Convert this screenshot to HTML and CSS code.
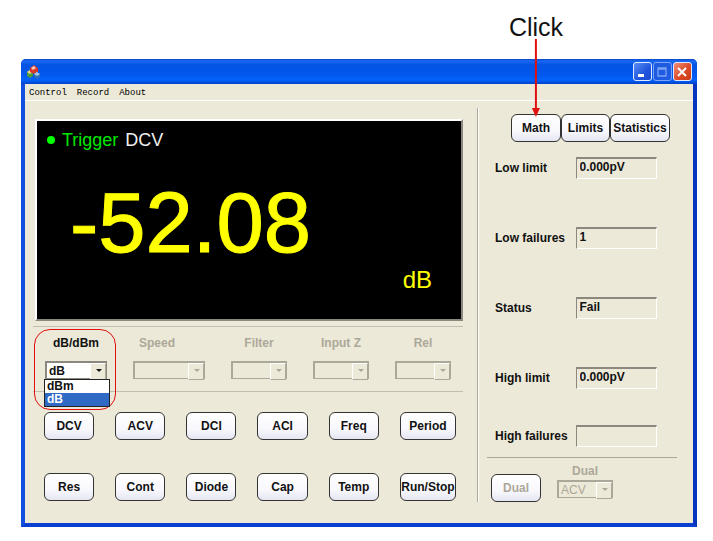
FILE: index.html
```html
<!DOCTYPE html>
<html lang="en">
<head>
  <meta charset="UTF-8">
  <meta name="viewport" content="width=device-width, initial-scale=1.0">
  <title>Multimeter</title>
  <link rel="stylesheet" href="styles.css">
</head>
<body>
  <div class="window">
    <header class="title-bar">
      <svg class="app-icon" width="14" height="14" viewBox="0 0 14 14">
        <path d="M0 7l3-2 3 2v4l-3 2-3-2z" fill="#4d9a3c"/>
        <path d="M0 7l3-2 3 2-3 2z" fill="#e8d890"/>
        <path d="M3 3l4-3 4 3v4L7 9 3 7z" fill="#d8392b"/>
        <path d="M4 3l3-2 2 2-3 2z" fill="#f7c9b8"/>
        <path d="M7 9l3-2 3 2v3l-3 2-3-2z" fill="#2f6fb5"/>
        <path d="M7 9l3-2 3 2-3 2z" fill="#a9c9e8"/>
      </svg>
      <div class="window-buttons">
        <button class="win-btn" aria-label="Minimize">
          <svg width="16" height="16" viewBox="0 0 16 16"><path d="M4 10h6v3H4z" fill="#fff"/></svg>
        </button>
        <button class="win-btn dim" aria-label="Maximize" disabled>
          <svg width="16" height="16" viewBox="0 0 16 16"><path d="M4 4h8v8H4zM4 5h8" fill="none" stroke="#7ba4f5" stroke-width="1.3"/></svg>
        </button>
        <button class="win-btn close" aria-label="Close">
          <svg width="16" height="16" viewBox="0 0 16 16"><path d="M4 4l8 8M12 4l-8 8" stroke="#fff" stroke-width="2"/></svg>
        </button>
      </div>
    </header>

    <nav class="menu">
      <a href="#">Control</a>
      <a href="#">Record</a>
      <a href="#">About</a>
    </nav>

    <main class="content">
      <section class="meter">
        <div class="display">
          <div class="mode"><span class="dot"></span><span class="trigger">Trigger</span> <span>DCV</span></div>
          <div class="reading">-52.08</div>
          <div class="unit">dB</div>
        </div>

        <div class="settings">
          <div class="setting active">
            <label for="scale">dB/dBm</label>
            <div class="combo">
              <select id="scale">
                <option>dBm</option>
                <option selected>dB</option>
              </select>
            </div>
            <ul class="drop-list">
              <li>dBm</li>
              <li class="selected">dB</li>
            </ul>
          </div>
          <div class="setting wide">
            <label for="speed">Speed</label>
            <div class="combo"><select id="speed" disabled></select></div>
          </div>
          <div class="setting">
            <label for="filter">Filter</label>
            <div class="combo"><select id="filter" disabled></select></div>
          </div>
          <div class="setting">
            <label for="input-z">Input Z</label>
            <div class="combo"><select id="input-z" disabled></select></div>
          </div>
          <div class="setting">
            <label for="rel">Rel</label>
            <div class="combo"><select id="rel" disabled></select></div>
          </div>
        </div>

        <div class="keypad">
          <button class="key">DCV</button>
          <button class="key">ACV</button>
          <button class="key">DCI</button>
          <button class="key">ACI</button>
          <button class="key">Freq</button>
          <button class="key">Period</button>
          <button class="key">Res</button>
          <button class="key">Cont</button>
          <button class="key">Diode</button>
          <button class="key">Cap</button>
          <button class="key">Temp</button>
          <button class="key">Run/Stop</button>
        </div>
      </section>

      <aside class="side">
        <div class="tabs">
          <div class="tab">
            <button class="key">Math</button>
            <div class="callout">
              <span>Click</span>
              <svg width="10" height="78" viewBox="0 0 10 78">
                <path d="M5 0v70" stroke="#e01010" stroke-width="2"/>
                <path d="M1 69h8l-4 9z" fill="#e01010"/>
              </svg>
            </div>
          </div>
          <button class="key">Limits</button>
          <button class="key">Statistics</button>
        </div>

        <div class="limits">
          <label for="low-limit">Low limit</label>
          <input id="low-limit" type="text" value="0.000pV" readonly>
          <label for="low-failures">Low failures</label>
          <input id="low-failures" type="text" value="1" readonly>
          <label for="status">Status</label>
          <input id="status" type="text" value="Fail" readonly>
          <label for="high-limit">High limit</label>
          <input id="high-limit" type="text" value="0.000pV" readonly>
        </div>
        <div class="limits last">
          <label for="high-failures">High failures</label>
          <input id="high-failures" type="text" value="" readonly>
        </div>

        <div class="dual">
          <button class="key" disabled>Dual</button>
          <div class="setting">
            <label for="dual">Dual</label>
            <div class="combo">
              <select id="dual" disabled>
                <option>ACV</option>
              </select>
            </div>
          </div>
        </div>
      </aside>
    </main>
  </div>
</body>
</html>
```

FILE: styles.css
```css
* {
  box-sizing: border-box;
}
body {
  margin: 0;
  padding: 59px 16px 14px 21px;
  background: #fff;
  font: bold 12px/14px "Liberation Sans", Arial, sans-serif;
  color: #111;
}
button, input, select {
  font: inherit;
  color: inherit;
}
.window {
  background: #ece9d8;
  border: 4px solid #0a3fd0;
  border-left-color: #1450e0;
  border-right-color: #0636bd;
  border-top: none;
  border-radius: 5px 5px 0 0;
}

/* title bar */
.title-bar {
  display: flex;
  align-items: center;
  justify-content: space-between;
  height: 25px;
  margin: 0 -4px;
  padding: 0 5px 0 6px;
  background: linear-gradient(#0a45c4 0, #1a6af5 2px, #0453e4 6px, #0258ee 16px, #0262fb 21px, #0142c8 25px);
  border-radius: 5px 5px 0 0;
}
.window-buttons {
  display: flex;
  gap: 1px;
}
.win-btn {
  width: 19px;
  height: 19px;
  padding: 0;
  border: 1px solid #dfe9ff;
  border-radius: 3px;
  background: linear-gradient(135deg, #5a8df5, #1f55dc 60%, #1a4bd0);
}
.win-btn svg {
  display: block;
}
.win-btn.dim {
  background: #1f5be0;
  border-color: #7ba4f5;
}
.win-btn.close {
  background: linear-gradient(135deg, #f0907a, #dd4a26 55%, #c83a16);
}

/* menu */
.menu {
  display: flex;
  gap: 10px;
  height: 17px;
  padding: 3px 4px 0;
  border-bottom: 1px solid #fff;
  font: 9px/12px "Liberation Mono", "Courier New", monospace;
}
.menu a {
  color: #000;
  text-decoration: none;
}

.content {
  display: grid;
  grid-template-columns: 444fr 216fr;
  padding: 7px 0 21px 8px;
}
.meter {
  min-width: 0;
  padding: 11px 14px 0 0;
}
.side {
  min-width: 0;
  padding: 6px 16px 0 9px;
  border-left: 1px solid #aca899;
  box-shadow: inset 1px 0 #fff;
}

/* display */
.display {
  display: flex;
  flex-direction: column;
  height: 202px;
  margin-left: 2px;
  padding: 9px 29px 27px 10px;
  background: #000;
  border: 2px solid #fff;
  border-right-color: #8c8880;
  border-bottom-color: #8c8880;
  color: #ff0;
  font-weight: normal;
}
.mode {
  display: flex;
  align-items: center;
  gap: 7px;
  font-size: 18px;
  line-height: 20px;
  color: #f0f0f0;
}
.dot {
  width: 8px;
  height: 8px;
  border-radius: 50%;
  background: #0f0;
}
.trigger {
  color: #00e800;
}
.reading {
  padding: 28px 0 0 23px;
  font-size: 85px;
  line-height: 90px;
  -webkit-text-stroke: 1px #ff0;
}
.unit {
  margin-top: auto;
  text-align: right;
  font-size: 24px;
  line-height: 24px;
}

/* combo boxes */
.settings {
  display: grid;
  grid-template-columns: 62fr 72fr 56fr 56fr 56fr;
  gap: 26px;
  margin-top: 5px;
  padding: 9px 12px 12px;
  border-top: 1px solid #c2bfb0;
  border-bottom: 1px solid #c2bfb0;
}
.setting {
  position: relative;
  min-width: 0;
  color: #aca899;
}
.setting.active {
  color: #111;
}
.setting label {
  display: block;
  margin-bottom: 11px;
  text-align: center;
  white-space: nowrap;
}
.setting.wide label {
  padding-left: 6px;
  text-align: left;
}
.combo {
  position: relative;
  height: 18px;
  border: 1px solid #aca899;
  border-width: 2px 1px 1px 2px;
}
.combo select {
  display: block;
  width: 100%;
  height: 15px;
  padding: 0 0 0 2px;
  border: none;
  border-radius: 0;
  background: transparent;
  appearance: none;
  opacity: 1;
}
.active .combo {
  border-color: #8c8880;
}
.active .combo select {
  background: #fff;
}
.combo::before,
.combo::after {
  content: "";
  position: absolute;
  pointer-events: none;
}
.combo::before {
  top: 0;
  right: 0;
  width: 14px;
  height: 15px;
  background: #ece9d8;
  border: 1px solid #fff;
  border-right-color: #aca899;
  border-bottom-color: #aca899;
}
.combo::after {
  top: 6px;
  right: 4px;
  border: 3px solid transparent;
  border-top-color: currentColor;
  border-bottom: none;
}
.drop-list {
  position: absolute;
  top: 43px;
  left: -1px;
  right: -3px;
  z-index: 1;
  margin: 0;
  padding: 0;
  list-style: none;
  background: #fff;
  border: 1px solid #222;
  line-height: 13px;
}
.drop-list li {
  padding-left: 2px;
}
.drop-list .selected {
  background: #316ac5;
  color: #fff;
}
/* red ring round the open combo box */
.active::before {
  content: "";
  position: absolute;
  top: -7px;
  bottom: -31px;
  left: -11px;
  right: -9px;
  border: 1px solid #e01010;
  border-radius: 16px;
}

/* buttons */
.key {
  height: 28px;
  padding: 0;
  border: 1px solid #333;
  border-radius: 6px;
  background: linear-gradient(#fff, #f8f8fd 60%, #e6e6f2);
  white-space: nowrap;
}
.key:disabled {
  color: #aca899;
}
.keypad {
  display: grid;
  grid-template-columns: repeat(5, 50fr) 56fr;
  gap: 33px 21px;
  padding: 20px 7px 0 11px;
}

/* right side */
.tabs {
  display: grid;
  grid-template-columns: 50fr 49fr 60fr;
  padding: 0 7px 0 24px;
}
.tab {
  position: relative;
  display: grid;
}
.callout {
  position: absolute;
  bottom: calc(100% - 3px);
  left: 50%;
  display: flex;
  flex-direction: column;
  align-items: center;
  transform: translateX(-50%);
  font-size: 25px;
  font-weight: normal;
  line-height: 24px;
}
.limits {
  display: grid;
  grid-template-columns: 81fr 82fr;
  row-gap: 48px;
  align-items: center;
  margin: 15px 20px 0 8px;
  white-space: nowrap;
}
.limits.last {
  margin-top: 36px;
}
.limits input {
  width: 100%;
  height: 22px;
  padding: 0 3px 3px;
  border: 1px solid #fff;
  border-top: 2px solid #8c8880;
  border-left: 1px solid #8c8880;
  background: transparent;
}
.dual {
  display: grid;
  grid-template-columns: 50fr 56fr;
  align-items: end;
  gap: 16px;
  margin-top: 10px;
  padding: 6px 64px 0 4px;
  border-top: 1px solid #aca899;
}
.dual .setting {
  padding-bottom: 4px;
}
.dual label {
  margin-bottom: 2px;
}
.dual select {
  font-weight: normal;
}
```
